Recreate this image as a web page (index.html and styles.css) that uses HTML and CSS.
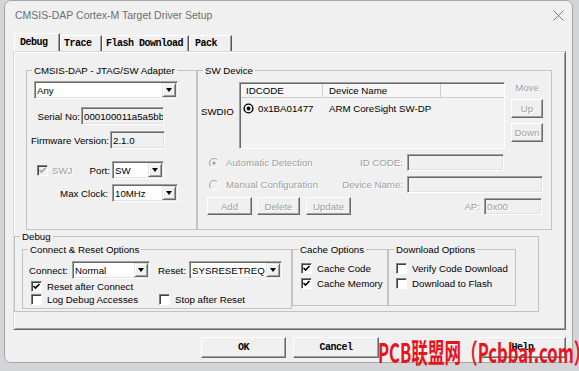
FILE: index.html
```html
<!DOCTYPE html>
<html>
<head>
<meta charset="utf-8">
<link rel="stylesheet" href="styles.css">
</head>
<body>
<div class="window">
  <div class="titlebar">
    <span class="title">CMSIS-DAP Cortex-M Target Driver Setup</span>
    <svg class="close" width="11" height="11" viewBox="0 0 11 11"><path d="M0.5 0.5L10.5 10.5M10.5 0.5L0.5 10.5" stroke="#7a7a7a" stroke-width="1"/></svg>
  </div>
  <div class="tabs">
    <div class="tab active">Debug</div>
    <div class="tab t-trace">Trace</div>
    <div class="tab t-flash">Flash Download</div>
    <div class="tab t-pack">Pack</div>
  </div>
  <div class="panel">
    <div class="toprow">
      <fieldset class="group g-adapter">
        <legend>CMSIS-DAP - JTAG/SW Adapter</legend>
        <div class="combo sunken c-any"><span class="val">Any</span><span class="drop"><i class="arrow"></i></span></div>
        <div class="frow r-serial"><span class="lbl l-serial">Serial No:</span><div class="edit sunken e-serial">000100011a5a5bb</div></div>
        <div class="frow r-fw"><span class="lbl l-fw">Firmware Version:</span><div class="edit sunken e-fw">2.1.0</div></div>
        <div class="frow r-swj">
          <span class="chk chk-swj"><span class="cb cb-dis"><svg width="9" height="9" viewBox="0 0 9 9"><path d="M1.5 4L3.5 6L7.5 2" stroke="#a0a0a0" stroke-width="1.6" fill="none"/></svg></span><span class="dim">SWJ</span></span>
          <span class="lbl l-port">Port:</span>
          <div class="combo sunken c-port"><span class="val">SW</span><span class="drop"><i class="arrow"></i></span></div>
        </div>
        <div class="frow r-clock"><span class="lbl l-clock">Max Clock:</span><div class="combo sunken c-clock"><span class="val">10MHz</span><span class="drop"><i class="arrow"></i></span></div></div>
      </fieldset>
      <fieldset class="group g-sw">
        <legend>SW Device</legend>
        <div class="sw-top">
          <span class="swdio">SWDIO</span>
          <div class="list">
            <div class="lhead"><span class="hc hc1">IDCODE</span><span class="hc hc2">Device Name</span><span class="hc hc3"></span></div>
            <div class="lrow">
              <span class="lc1"><svg class="target" width="11" height="11" viewBox="0 0 11 11"><circle cx="5.5" cy="5.5" r="4.4" stroke="#000" stroke-width="1.4" fill="none"/><circle cx="5.5" cy="5.5" r="1.9" fill="#000"/></svg><span>0x1BA01477</span></span>
              <span class="lc2">ARM CoreSight SW-DP</span>
            </div>
          </div>
          <div class="movecol">
            <span class="dim move">Move</span>
            <div class="btn dim b-up">Up</div>
            <div class="btn dim b-down">Down</div>
          </div>
        </div>
        <div class="sw-r sw-r2">
          <span class="radio-item"><svg width="10" height="10" viewBox="0 0 10 10"><circle cx="5" cy="5" r="4.5" fill="#f0f0f0"/><path d="M8.2 1.8A4.5 4.5 0 0 0 1.8 8.2" stroke="#a0a0a0" fill="none"/><path d="M1.8 8.2A4.5 4.5 0 0 0 8.2 1.8" stroke="#fff" fill="none"/><circle cx="5" cy="5" r="1.6" fill="#a0a0a0"/></svg><span class="dim rtext">Automatic Detection</span></span>
          <span class="lbl dim l-id">ID CODE:</span>
          <div class="edit sunken e-id"></div>
        </div>
        <div class="sw-r sw-r3">
          <span class="radio-item"><svg width="10" height="10" viewBox="0 0 10 10"><circle cx="5" cy="5" r="4.5" fill="#f0f0f0"/><path d="M8.2 1.8A4.5 4.5 0 0 0 1.8 8.2" stroke="#a0a0a0" fill="none"/><path d="M1.8 8.2A4.5 4.5 0 0 0 8.2 1.8" stroke="#fff" fill="none"/></svg><span class="dim rtext">Manual Configuration</span></span>
          <span class="lbl dim l-id">Device Name:</span>
          <div class="edit sunken e-dn"></div>
        </div>
        <div class="sw-r sw-r4">
          <div class="btn dim b-add">Add</div>
          <div class="btn dim b-del">Delete</div>
          <div class="btn dim b-upd">Update</div>
          <span class="lbl dim l-ap">AP:</span>
          <div class="edit sunken e-ap"><span class="dim">0x00</span></div>
        </div>
      </fieldset>
    </div>
    <fieldset class="group g-debug">
      <legend>Debug</legend>
      <div class="dbg-row">
        <fieldset class="group g-cr">
          <legend>Connect &amp; Reset Options</legend>
          <div class="cr-r1">
            <span class="l-conn">Connect:</span>
            <div class="combo sunken c-conn"><span class="val">Normal</span><span class="drop"><i class="arrow"></i></span></div>
            <span class="l-reset">Reset:</span>
            <div class="combo sunken c-reset"><span class="val">SYSRESETREQ</span><span class="drop"><i class="arrow"></i></span></div>
          </div>
          <div class="cr-checks">
            <span class="chk chk-first"><span class="cb"><svg width="9" height="9" viewBox="0 0 9 9"><path d="M1.5 4L3.5 6L7.5 2" stroke="#000" stroke-width="1.6" fill="none"/></svg></span>Reset after Connect</span>
            <span></span>
            <span class="chk chk-first"><span class="cb"></span>Log Debug Accesses</span>
            <span class="chk"><span class="cb"></span>Stop after Reset</span>
          </div>
        </fieldset>
        <fieldset class="group g-cache">
          <legend>Cache Options</legend>
          <div class="opts">
            <span class="chk"><span class="cb"><svg width="9" height="9" viewBox="0 0 9 9"><path d="M1.5 4L3.5 6L7.5 2" stroke="#000" stroke-width="1.6" fill="none"/></svg></span>Cache Code</span>
            <span class="chk"><span class="cb"><svg width="9" height="9" viewBox="0 0 9 9"><path d="M1.5 4L3.5 6L7.5 2" stroke="#000" stroke-width="1.6" fill="none"/></svg></span>Cache Memory</span>
          </div>
        </fieldset>
        <fieldset class="group g-dl">
          <legend>Download Options</legend>
          <div class="opts opts-dl">
            <span class="chk"><span class="cb"></span>Verify Code Download</span>
            <span class="chk"><span class="cb"></span>Download to Flash</span>
          </div>
        </fieldset>
      </div>
    </fieldset>
  </div>
  <div class="buttons">
    <div class="btn big b-ok">OK</div>
    <div class="btn big b-cancel">Cancel</div>
    <div class="btn big b-help">Help</div>
  </div>
</div>
<div class="wm">PCB联盟网（Pcbbar.com）</div>
</body>
</html>
```
FILE: styles.css
```css
* { box-sizing: border-box; }
html, body { margin: 0; }
body {
  width: 579px; height: 371px; overflow: hidden;
  background: #d2d4d7;
  font-family: "Liberation Sans", Arial, sans-serif;
  font-size: 9.7px; line-height: 13px; color: #000;
  position: relative;
}
.window {
  margin-left: 4px; width: 569px; height: 363px;
  border: 1px solid #a7a7a7; border-radius: 7px;
  background: #f0f0f0;
  display: flex; flex-direction: column;
}
.titlebar { height: 28px; flex: none; display: flex; align-items: center; padding: 0 8px 0 10px; }
.title { font-family: "Liberation Sans", Arial, sans-serif; font-size: 10.5px; color: #6e6e6e; }
.close { margin-left: auto; }

.tabs { display: flex; align-items: flex-end; height: 22px; flex: none; margin-left: 9px; }
.tab {
  height: 16px; display: flex; align-items: center; padding-left: 3px;
  font-family: "Liberation Mono", monospace; font-weight: bold; font-size: 10px; letter-spacing: -0.5px;
  border-top: 1px solid #fff; border-left: 1px solid #fff; border-right: 1px solid #555;
  box-shadow: inset -1px 0 #a0a0a0;
}
.tab.active { height: 18px; width: 46px; padding-left: 5px; }
.t-trace { width: 42px; }
.t-flash { width: 87px; }
.t-pack { width: 43px; padding-left: 5px; }

.panel {
  margin-left: 8px; width: 553px; height: 279px; flex: none;
  border: 1px solid; border-color: #d8d8d8 #6a6a6a #6a6a6a #d8d8d8;
  box-shadow: inset 1px 1px #fff, inset -1px -1px #a0a0a0;
}
.toprow { display: flex; margin: 12px 0 0 12px; }

fieldset.group { margin: 0; padding: 0; border: 1px solid #c2c2c2; min-width: 0; }
fieldset.group > legend { padding: 0 2px; margin-left: 5px; line-height: 13px; white-space: nowrap; }

.g-adapter { width: 171px; height: 166px; }
.g-sw { margin-left: 1px; width: 355px; height: 166px; }

.sunken {
  border: 1px solid; border-color: #a0a0a0 #fff #fff #a0a0a0;
  box-shadow: inset 1px 1px #696969, inset -1px -1px #e3e3e3;
  padding: 1px;
}
.combo { display: flex; align-items: center; background: #fff; flex: none; }
.combo .val { padding-left: 1px; white-space: nowrap; overflow: hidden; }
.drop {
  width: 14px; height: 14px; margin-left: auto; flex: none;
  border: 1px solid; border-color: #e3e3e3 #696969 #696969 #e3e3e3;
  box-shadow: inset 1px 1px #fff, inset -1px -1px #a0a0a0;
  background: #f0f0f0;
  display: flex; align-items: center; justify-content: center;
}
.arrow { display: block; width: 0; height: 0; border-left: 3.5px solid transparent; border-right: 3.5px solid transparent; border-top: 4px solid #000; }
.edit { display: flex; align-items: center; white-space: nowrap; overflow: hidden; background: #f0f0f0; padding-left: 2px; flex: none; }

.frow { display: flex; align-items: center; }
.lbl { text-align: right; flex: none; padding-right: 1px; white-space: nowrap; }
.c-any { margin: 4px 0 0 7px; width: 144px; height: 18px; }
.r-serial { margin-top: 8px; }
.l-serial { width: 54px; }
.e-serial { width: 83px; height: 18px; }
.r-fw { margin-top: 6px; }
.l-fw { width: 83px; }
.e-fw { width: 55px; height: 18px; }
.r-swj { margin-top: 12px; }
.chk-swj { margin-left: 10px; width: 50px; }
.l-port { width: 25px; padding-right: 2px; }
.c-port { width: 52px; height: 18px; }
.r-clock { margin-top: 5px; }
.l-clock { width: 85px; padding-right: 4px; }
.c-clock { width: 66px; height: 18px; }

.dim { color: #a0a0a0; text-shadow: 1px 1px #fff; }

.chk { display: flex; align-items: center; height: 13px; white-space: nowrap; }
.cb {
  width: 11px; height: 11px; flex: none; margin-right: 5px;
  background: #fff; border: 1px solid; border-color: #808080 #fff #fff #808080;
  box-shadow: inset 1px 1px #404040;
  display: flex; align-items: center; justify-content: center;
}
.cb-dis { background: #f0f0f0; margin-right: 4px; }

.sw-top { display: flex; margin-top: 5px; }
.swdio { width: 41px; padding: 23px 0 0 3px; flex: none; }
.list {
  width: 266px; height: 67px; flex: none; background: #f2f2f2;
  border: 1px solid; border-color: #a0a0a0 #fff #fff #a0a0a0;
  box-shadow: inset 1px 1px #696969;
  padding: 1px 0 0 1px;
}
.lhead { display: flex; height: 14px; border-bottom: 1px solid #cfcfcf; background: #f6f6f6; }
.hc { border-right: 1px solid #cfcfcf; padding-left: 5px; line-height: 13px; }
.hc1 { width: 82px; }
.hc2 { width: 118px; padding-left: 6px; }
.hc3 { flex: 1; border-right: none; }
.lrow { display: flex; align-items: center; height: 14px; margin-top: 3px; }
.lc1 { width: 82px; display: flex; align-items: center; padding-left: 2px; }
.lc1 span { margin-left: 4px; }
.lc2 { padding-left: 6px; white-space: nowrap; }
.movecol { margin: -1px 0 0 6px; width: 32px; display: flex; flex-direction: column; }
.move { text-align: center; height: 13px; }

.btn {
  display: flex; align-items: center; justify-content: center; flex: none;
  border: 1px solid; border-color: #fff #696969 #696969 #fff;
  box-shadow: inset -1px -1px #a0a0a0;
  background: #f0f0f0; white-space: nowrap;
}
.b-up, .b-down { margin-top: 5px; height: 19px; }

.sw-r { display: flex; align-items: center; }
.sw-r2 { margin-top: 5px; height: 17px; }
.sw-r3 { margin-top: 5px; height: 17px; }
.sw-r4 { margin-top: 4px; height: 18px; }
.radio-item { width: 141px; display: flex; align-items: center; padding-left: 11px; flex: none; }
.rtext { margin-left: 7px; white-space: nowrap; }
.l-id { width: 68px; padding-right: 4px; }
.e-id { width: 97px; height: 17px; }
.e-dn { width: 136px; height: 17px; }
.b-add { margin-left: 9px; width: 45px; height: 18px; }
.b-del { margin-left: 5px; width: 43px; height: 18px; }
.b-upd { margin-left: 6px; width: 45px; height: 18px; }
.l-ap { margin-left: auto; padding-right: 4px; }
.e-ap { width: 58px; height: 17px; margin-right: 9px; }

.g-debug { margin: 5px 0 0 13px; width: 525px; height: 82px; }
.g-debug > legend, .g-cr > legend, .g-cache > legend, .g-dl > legend { line-height: 11px; }
.dbg-row { display: flex; margin-left: 7px; }
.g-cr { width: 270px; height: 66px; }
.cr-r1 { display: flex; align-items: center; margin-top: 5px; height: 18px; padding-left: 6px; }
.l-conn { width: 43px; }
.c-conn { width: 78px; height: 18px; }
.l-reset { margin-left: 8px; width: 31px; }
.c-reset { width: 93px; height: 18px; }
.cr-checks { display: grid; grid-template-columns: 136px auto; margin-top: 1px; }
.chk-first { padding-left: 8px; }
.g-cache { margin-left: 8px; width: 96px; height: 63px; }
.g-dl { margin-left: 8px; width: 128px; height: 63px; }
.opts { margin-top: 5px; padding-left: 8px; display: flex; flex-direction: column; gap: 1px; }
.opts .chk { height: 14px; }
.opts-dl { padding-left: 7px; }

.buttons { display: flex; margin-top: 7px; height: 21px; flex: none; }
.big { font-family: "Liberation Mono", monospace; font-weight: bold; font-size: 10px; letter-spacing: -0.5px; height: 21px; }
.b-ok { margin-left: 196px; width: 85px; }
.b-cancel { margin-left: 7px; width: 86px; }
.b-help { margin-left: auto; margin-right: 6px; width: 87px; }

.wm {
  position: absolute; left: 378px; top: 335px;
  color: #e8141c; font-family: "Noto Sans CJK SC", sans-serif; font-weight: bold;
  font-size: 27px; line-height: 34px; white-space: nowrap;
  transform: scaleX(0.615); transform-origin: 0 0;
}
```
